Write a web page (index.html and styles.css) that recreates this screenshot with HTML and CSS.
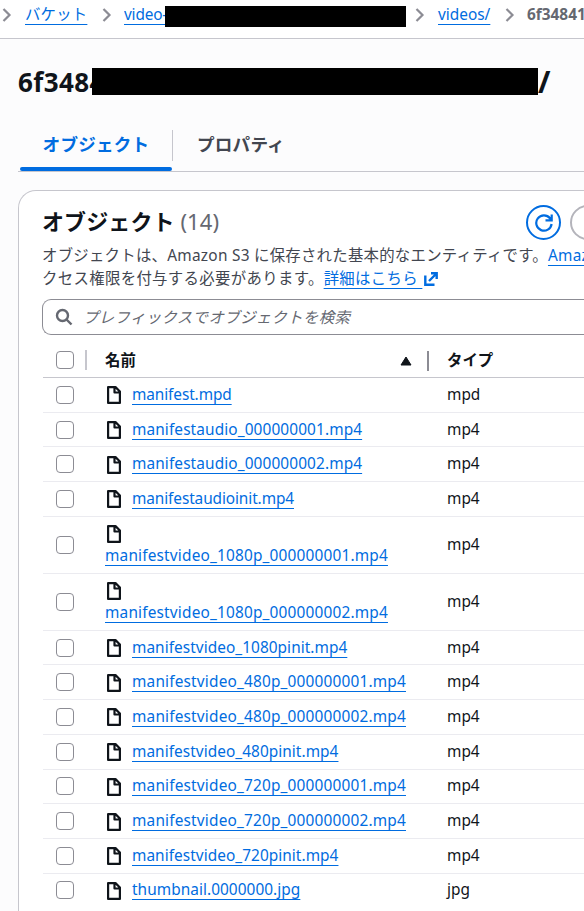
FILE: index.html
```html
<!DOCTYPE html>
<html lang="ja">
<head>
    <meta charset="UTF-8">
    <meta name="viewport" content="width=device-width, initial-scale=1.0">
    <title>オブジェクト</title>
    <link rel="stylesheet" href="styles.css">
</head>
<body>
    <!-- Shared icon shapes -->
    <svg class="icon-defs" width="0" height="0">
        <symbol id="chevron" viewBox="0 0 10 16"><path d="M1.500 2 7.500 8l-6 6" fill="none" stroke="#8c8c94" stroke-width="2.200"/></symbol>
        <symbol id="file" viewBox="0 0 14 18"><path d="M1.100 1.100h7.400L12.900 5.500v11.400H1.100zM7.500 1.100V6.500h5.400" fill="none" stroke="#0f141a" stroke-width="2.200" stroke-linejoin="round"/></symbol>
    </svg>

    <nav class="breadcrumbs">
        <svg class="chevron"><use href="#chevron"/></svg>
        <a class="crumb crumb-buckets" href="#">バケット</a>
        <svg class="chevron"><use href="#chevron"/></svg>
        <span class="crumb-masked"><a class="crumb" href="#">video-</a></span>
        <span class="mask mask-crumb"></span>
        <svg class="chevron"><use href="#chevron"/></svg>
        <a class="crumb crumb-videos" href="#">videos/</a>
        <svg class="chevron"><use href="#chevron"/></svg>
        <span class="crumb-current">6f34841</span>
    </nav>

    <h1 class="page-title">
        <span class="title-start">6f3484</span><span class="mask mask-title"></span><span class="title-end">/</span>
    </h1>

    <div class="tabs">
        <button class="tab active">オブジェクト</button>
        <button class="tab">プロパティ</button>
    </div>

    <div class="container">
        <div class="container-header">
            <h2>オブジェクト <span class="counter">(14)</span></h2>
            <div class="actions">
                <button class="button button-refresh" aria-label="更新">
                    <svg width="18" height="18" viewBox="0 0 18 18" fill="none" stroke="#006ce0" stroke-width="2.200"><path d="M16.600 10A7.700 7.700 0 1 1 15 4.200L16.500 6M10.500 6.300h6.200V0.500"/></svg>
                </button>
                <button class="button button-disabled" disabled></button>
            </div>
        </div>

        <p class="description">
            <span class="line">オブジェクトは、Amazon S3 に保存された基本的なエンティティです。<a href="#">Amazon S3 インベントリ</a></span>
            <span class="line line-more">クセス権限を付与する必要があります。<a class="more" href="#">詳細はこちら <svg class="external" width="16" height="16" viewBox="0 0 16 16" fill="none" stroke="#006ce0" stroke-width="2.400"><path d="M2.300 4.500v9.200h9.200M8 2.300h5.700V8M13.500 2.500 6 10"/></svg></a></span>
        </p>

        <div class="search">
            <svg width="18" height="18" viewBox="0 0 18 18" fill="none" stroke="#656871" stroke-width="2.400"><circle cx="7.500" cy="7.500" r="5.500"/><path d="m11.500 11.500 5 5"/></svg>
            <input type="text" placeholder="プレフィックスでオブジェクトを検索">
        </div>

        <div class="table">
            <div class="row row-head">
                <div class="cell-check"><span class="checkbox"></span><span class="divider"></span></div>
                <div class="cell-name">名前<svg class="sort" width="12" height="10" viewBox="0 0 12 10"><path d="M6 1 11 9H1z" fill="#0f141a" stroke="#0f141a" stroke-linejoin="round"/></svg><span class="divider divider-dark"></span></div>
                <div class="cell-type">タイプ</div>
            </div>
            <div class="row">
                <div class="cell-check"><span class="checkbox"></span></div>
                <div class="cell-name"><svg class="file"><use href="#file"/></svg><a class="short" href="#">manifest.mpd</a></div>
                <div class="cell-type">mpd</div>
            </div>
            <div class="row">
                <div class="cell-check"><span class="checkbox"></span></div>
                <div class="cell-name"><svg class="file"><use href="#file"/></svg><a class="audio" href="#">manifestaudio_000000001.mp4</a></div>
                <div class="cell-type">mp4</div>
            </div>
            <div class="row">
                <div class="cell-check"><span class="checkbox"></span></div>
                <div class="cell-name"><svg class="file"><use href="#file"/></svg><a class="audio" href="#">manifestaudio_000000002.mp4</a></div>
                <div class="cell-type">mp4</div>
            </div>
            <div class="row">
                <div class="cell-check"><span class="checkbox"></span></div>
                <div class="cell-name"><svg class="file"><use href="#file"/></svg><a class="short" href="#">manifestaudioinit.mp4</a></div>
                <div class="cell-type">mp4</div>
            </div>
            <div class="row row-tall">
                <div class="cell-check"><span class="checkbox"></span></div>
                <div class="cell-name"><svg class="file"><use href="#file"/></svg><a class="segment" href="#">manifestvideo_1080p_000000001.mp4</a></div>
                <div class="cell-type">mp4</div>
            </div>
            <div class="row row-tall">
                <div class="cell-check"><span class="checkbox"></span></div>
                <div class="cell-name"><svg class="file"><use href="#file"/></svg><a class="segment" href="#">manifestvideo_1080p_000000002.mp4</a></div>
                <div class="cell-type">mp4</div>
            </div>
            <div class="row">
                <div class="cell-check"><span class="checkbox"></span></div>
                <div class="cell-name"><svg class="file"><use href="#file"/></svg><a class="init" href="#">manifestvideo_1080pinit.mp4</a></div>
                <div class="cell-type">mp4</div>
            </div>
            <div class="row">
                <div class="cell-check"><span class="checkbox"></span></div>
                <div class="cell-name"><svg class="file"><use href="#file"/></svg><a class="segment" href="#">manifestvideo_480p_000000001.mp4</a></div>
                <div class="cell-type">mp4</div>
            </div>
            <div class="row">
                <div class="cell-check"><span class="checkbox"></span></div>
                <div class="cell-name"><svg class="file"><use href="#file"/></svg><a class="segment" href="#">manifestvideo_480p_000000002.mp4</a></div>
                <div class="cell-type">mp4</div>
            </div>
            <div class="row">
                <div class="cell-check"><span class="checkbox"></span></div>
                <div class="cell-name"><svg class="file"><use href="#file"/></svg><a class="init" href="#">manifestvideo_480pinit.mp4</a></div>
                <div class="cell-type">mp4</div>
            </div>
            <div class="row">
                <div class="cell-check"><span class="checkbox"></span></div>
                <div class="cell-name"><svg class="file"><use href="#file"/></svg><a class="segment" href="#">manifestvideo_720p_000000001.mp4</a></div>
                <div class="cell-type">mp4</div>
            </div>
            <div class="row">
                <div class="cell-check"><span class="checkbox"></span></div>
                <div class="cell-name"><svg class="file"><use href="#file"/></svg><a class="segment" href="#">manifestvideo_720p_000000002.mp4</a></div>
                <div class="cell-type">mp4</div>
            </div>
            <div class="row">
                <div class="cell-check"><span class="checkbox"></span></div>
                <div class="cell-name"><svg class="file"><use href="#file"/></svg><a class="init" href="#">manifestvideo_720pinit.mp4</a></div>
                <div class="cell-type">mp4</div>
            </div>
            <div class="row">
                <div class="cell-check"><span class="checkbox"></span></div>
                <div class="cell-name"><svg class="file"><use href="#file"/></svg><a class="init" href="#">thumbnail.0000000.jpg</a></div>
                <div class="cell-type">jpg</div>
            </div>
        </div>
    </div>
</body>
</html>
```
FILE: styles.css
```css
* {
    box-sizing: border-box;
}
body {
    margin: 0;
    height: 911px;
    overflow: hidden;
    background-color: #fcfcfd;
    color: #0f141a;
    font-family: "Noto Sans", "Noto Sans CJK JP", sans-serif;
    font-size: 15.4px;
    line-height: 22px;
}
a {
    color: #006ce0;
    text-decoration: underline;
    text-decoration-thickness: 1px;
    text-underline-offset: 4px;
    text-decoration-skip-ink: none;
}
button {
    font-family: inherit;
    padding: 0;
}
.icon-defs {
    display: none;
}
.mask {
    flex: none;
    background-color: #000;
}

/* Breadcrumbs */
.breadcrumbs {
    display: flex;
    align-items: center;
    height: 39px;
    padding: 0 0 9px 2px;
    background-color: #fff;
    border-bottom: 1px solid #c6c6cd;
    white-space: nowrap;
    overflow: hidden;
}
.chevron {
    flex: none;
    width: 10px;
    height: 16px;
}
.crumb-buckets {
    flex: none;
    width: 63px;
    margin: 0 14px 0 13px;
    letter-spacing: 0.2px;
}
.crumb-masked {
    flex: none;
    width: 41px;
    margin-left: 12px;
    overflow: hidden;
    letter-spacing: -0.2px;
}
.mask-crumb {
    width: 241px;
    height: 21px;
    margin: 3px 9px 0 0;
}
.crumb-videos {
    flex: none;
    width: 53px;
    margin: 0 14px 0 13px;
}
.crumb-current {
    flex: none;
    margin-left: 12px;
    color: #656871;
    font-weight: 700;
}

/* Title */
.page-title {
    display: flex;
    align-items: center;
    height: 27px;
    margin: 29px 0 0 18px;
    font-size: 26px;
    line-height: 34px;
}
.title-start {
    width: 74px;
    overflow: hidden;
    letter-spacing: 0.4px;
}
.mask-title {
    width: 446px;
    height: 27px;
}
.title-end {
    font-size: 30px;
}

/* Tabs */
.tabs {
    display: flex;
    height: 77px;
    margin-left: 18px;
    padding: 25px 0 0 2px;
    border-bottom: 1px solid #c6c6cd;
}
.tab {
    position: relative;
    height: 51px;
    border: none;
    background: none;
    color: #424650;
    padding: 0 24px 5px 25px;
    font-size: 17.6px;
    font-weight: 700;
    letter-spacing: 0.2px;
}
.tab.active {
    width: 152px;
    padding: 0 0 5px;
    color: #006ce0;
}
.tab.active::before {
    content: "";
    position: absolute;
    right: -1px;
    top: 10px;
    height: 31px;
    border-right: 1px solid #c6c6cd;
}
.tab.active::after {
    content: "";
    position: absolute;
    left: 0;
    right: 0;
    bottom: 0;
    height: 4px;
    border-radius: 2px;
    background-color: #006ce0;
}

/* Container */
.container {
    height: 760px;
    margin: 18px 0 0 18px;
    padding: 14px 0 0 23px;
    overflow: hidden;
    background-color: #fff;
    border: 1px solid #c6c6cd;
    border-right: none;
    border-radius: 18px 0 0 18px;
}
.container-header {
    display: flex;
    height: 36px;
}
h2 {
    flex: none;
    width: 484px;
    margin: 0;
    font-size: 22px;
    line-height: 32px;
    letter-spacing: 0.1px;
}
.counter {
    color: #656871;
    font-weight: 400;
}
.actions {
    display: flex;
    gap: 9px;
}
.button {
    display: flex;
    flex: none;
    align-items: center;
    justify-content: center;
    width: 35px;
    height: 35px;
    border: 2px solid #006ce0;
    border-radius: 18px;
    background: #fff;
}
.button-disabled {
    width: 80px;
    border-color: #b4b4bb;
}
.description {
    margin: 3px 0 0;
    color: #424650;
    line-height: 23px;
    letter-spacing: 0.26px;
    white-space: nowrap;
}
.line {
    display: block;
}
.line-more {
    letter-spacing: 0.34px;
}
.external {
    margin-left: 1px;
    vertical-align: -3px;
}
.search {
    display: flex;
    align-items: center;
    height: 36px;
    margin-top: 9px;
    padding-left: 12px;
    border: 1px solid #8c8c94;
    border-right: none;
    border-radius: 9px 0 0 9px;
}
.search input {
    width: 400px;
    margin-left: 10px;
    padding: 0;
    border: none;
    outline: none;
    font: italic 15.4px "Noto Sans", "Noto Sans CJK JP", sans-serif;
    letter-spacing: 0.38px;
}
.search input::placeholder {
    color: #656871;
}

/* Object table */
.table {
    margin-left: 1px;
}
.row {
    display: flex;
    align-items: center;
    height: 34.7px;
    border-bottom: 1px solid #ebebf0;
}
.row:last-child {
    border-color: transparent;
}
.row-tall {
    height: 57px;
}
.row-head {
    height: 43px;
    padding-top: 8px;
    border-color: #c6c6cd;
    font-weight: 700;
}
.cell-check {
    display: flex;
    align-items: center;
    width: 62px;
    padding-left: 13px;
}
.checkbox {
    width: 18px;
    height: 18px;
    border: 1px solid #8c8c94;
    border-radius: 4px;
}
.cell-name {
    display: flex;
    align-items: center;
    width: 342px;
}
.row-head .cell-name,
.row-head .cell-type {
    padding-top: 1px;
}
.short {
    letter-spacing: -0.1px;
}
.audio {
    letter-spacing: 0.11px;
}
.segment {
    letter-spacing: 0.18px;
}
.init {
    letter-spacing: 0.05px;
}
.file {
    width: 14px;
    height: 18px;
    margin: 1px 11px 0 2px;
}
.row-tall .cell-name {
    flex-direction: column;
    align-items: flex-start;
}
.row-tall .file {
    margin: 2px 0 2px 2px;
}
.divider {
    width: 2px;
    height: 20px;
    margin-left: 11px;
    background-color: #c6c6cd;
}
.sort {
    margin-left: auto;
}
.divider-dark {
    margin: 0 18px 0 15px;
    background-color: #8c8c94;
}
```
